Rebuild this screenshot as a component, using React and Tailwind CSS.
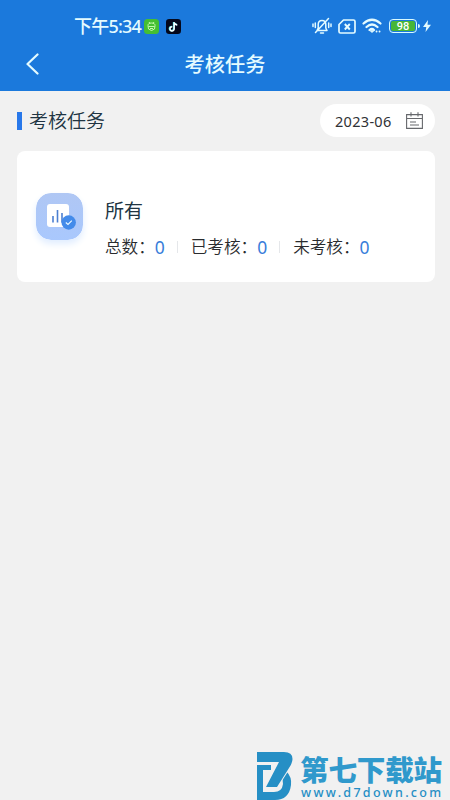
import React from 'react';

const stats = [
  { id: 'total', label: '总数：', value: 0 },
  { id: 'done', label: '已考核：', value: 0 },
  { id: 'todo', label: '未考核：', value: 0 },
];

const StatusBar = () => (
  <div className="flex h-[38px] items-end justify-between pr-[19px] pl-[74px] text-[#e4fbff]">
    <div className="flex h-6 items-center">
      <span className="w-[70px] text-[18px] leading-6 font-medium tracking-[-0.8px] whitespace-nowrap">下午5:34</span>
      <svg className="h-[15px] w-[15px]" viewBox="0 0 15 15" fill="none">
        <rect width="15" height="15" rx="3.5" fill="#45bf32" />
        <path d="M4 6.5C4 4.5 5.5 4 7.5 4S11 4.500 11 6.500L10.500 10Q7.500 13 4.500 10Z M4.500 7.500H10.500 M5 3L6 4.500 M10 3L9 4.500 M6 9.500H9" stroke="#d0ffb9" strokeWidth="0.9" />
      </svg>
      <svg className="ml-[7px] h-[15px] w-[15px]" viewBox="0 0 15 15" fill="none">
        <rect width="15" height="15" rx="3.2" fill="#04081b" />
        <path d="M7.700 3V9.700A2.100 2.100 0 1 1 5.800 7.500 M7.700 3.200Q8.500 5.500 11 5.700" stroke="#53e7e9" strokeWidth="1.7" />
        <path d="M8.200 3.300V10A2.100 2.100 0 1 1 6.300 7.800 M8.200 3.500Q9 5.800 11.300 6" stroke="#fff" strokeWidth="1.400" />
      </svg>
    </div>
    <div className="flex h-6 items-center">
      {/* Muted bell */}
      <svg className="h-[18px] w-5" viewBox="0 0 20 18" fill="none" stroke="currentColor" strokeWidth="1.5" strokeLinecap="round" strokeLinejoin="round">
        <path d="M5 13.500H15L13.800 11V7.500C13.800 2 6.200 2 6.200 7.500V11Z M8.500 16H11.500 M16.500 1.500L3.500 15.500 M3.300 6V10.500 M1 7V9.500 M16.700 6V10.500 M19 7V9.500" />
      </svg>
      {/* No SIM */}
      <svg className="ml-[6px] h-[15px] w-[18px]" viewBox="0 0 18 15" fill="none" stroke="currentColor" strokeWidth="1.7" strokeLinejoin="round">
        <path d="M5.500 1H15.500Q17 1 17 2.500V12.500Q17 14 15.500 14H2.500Q1 14 1 12.500V5.500Z" />
        <path d="M6.800 5L11.800 10.500M11.800 5L6.800 10.500" strokeWidth="1.900" />
      </svg>
      <svg className="ml-[6px] h-4 w-5" viewBox="0 0 20 16" fill="none" stroke="currentColor" strokeWidth="2.2" strokeLinecap="round">
        <path d="M1.500 5.500Q10 -2 18.500 5.500 M4.500 9Q10 4 15.500 9 M7.500 12Q10 10 12 12" />
        <path d="M8.500 13L10 14.500L11.500 13Z" fill="currentColor" strokeWidth="1" />
        <path d="M14.500 13.500H14.600M17.500 13.500H17.600" strokeWidth="1.800" />
      </svg>
      <div className="ml-[7px] flex h-[14px] w-[28px] items-center rounded-[4px] border-[1.500px] border-[#d8faff] p-px">
        <div className="flex h-full w-full items-center justify-center rounded-[2px] bg-[#47b638] font-['Roboto',sans-serif] text-[11px] leading-none font-medium text-white">98</div>
      </div>
      <div className="ml-px h-1 w-[2px] rounded-r bg-[#d8faff]" />
      <svg className="ml-[3px] h-3 w-2" viewBox="0 0 8 12" fill="currentColor">
        <path d="M5 0L0 7H3.300L2.500 12L8 4.800H4.500Z" />
      </svg>
    </div>
  </div>
);

const Header = () => (
  <header className="h-[91px] bg-[#1b79dc]">
    <StatusBar />
    <div className="grid h-[52px] grid-cols-[1fr_auto_1fr] items-center">
      <button className="ml-[25px] w-4" aria-label="返回">
        <svg className="h-[22px] w-[15px]" viewBox="0 0 15 22" fill="none" stroke="#e4fbff" strokeWidth="2.2" strokeLinecap="round" strokeLinejoin="round">
          <path d="M12.500 1.500L2.500 11L12.500 20.500" />
        </svg>
      </button>
      <h1 className="text-[20.200px] leading-7 font-medium text-[#e4fbff]">考核任务</h1>
    </div>
  </header>
);

const TaskIcon = () => (
  <svg className="h-[47px] w-[47px] shrink-0 rounded-[15px] shadow-[0_4px_7px_#e0edff]" viewBox="0 0 47 47" fill="none">
    <defs>
      <linearGradient id="tile" x1="0" y1="0" x2="0" y2="1">
        <stop stopColor="#b0c7f4" />
        <stop offset="1" stopColor="#a9c8fd" />
      </linearGradient>
    </defs>
    <rect width="47" height="47" rx="15" fill="url(#tile)" />
    <rect x="11" y="11" width="22" height="23" rx="3" fill="#fff" />
    <path d="M17 23V29.500M21.500 17V29.500M26 20V29.500" stroke="#4c7fd1" strokeWidth="1.600" />
    <circle cx="32.700" cy="29.500" r="7.200" fill="#438bea" />
    <path d="M29.800 29.500L32 31.500L35.800 27.700" stroke="#e9f8ff" strokeWidth="1.200" />
  </svg>
);

const Watermark = () => (
  <div className="flex h-[49px] w-[187px] gap-[7px] font-['Noto_Sans_CJK_SC',sans-serif] text-[#268fc5]">
    <svg className="h-[49px] w-[36px] shrink-0" viewBox="0 0 36 49" fill="currentColor">
      <path d="M0 14H14V19H6V41H17Q25 41 26 33Q26.300 29 24.500 26.500L29.500 20.500Q35 26 34 34Q32 49 18 49H0Z" />
      <path d="M0 1H27Q35.500 1 35.500 8Q35.500 12 32 17L20 36H9L22 11H0Z" stroke="#f1f1f1" strokeWidth="2" paintOrder="stroke" />
    </svg>
    <div className="flex w-[144px] flex-col pt-[3px]">
      <div className="h-[33px] text-[28.600px] leading-[29px] font-black tracking-[-0.200px] whitespace-nowrap text-[#3099cc]">第七下载站</div>
      <div className="h-3 pl-px font-['Noto_Sans',sans-serif] text-[12.500px] leading-3 font-medium tracking-[2.300px] whitespace-nowrap">www.d7down.com</div>
    </div>
  </div>
);

const App = () => {
  return (
    <div className="flex h-[800px] w-[450px] flex-col overflow-hidden bg-[#f1f1f1] font-['Noto_Sans','Noto_Sans_CJK_SC',sans-serif]">
      <Header />

      <main className="flex-1 pr-[15px] pl-[17px]">
        <div className="mt-[13px] flex h-[33px] items-center justify-between">
          <div className="flex items-center gap-[7px]">
            <span className="h-[18px] w-[5px] bg-[#2878ea]" />
            <h2 className="text-[19px] leading-6 font-[350] text-[#203442]">考核任务</h2>
          </div>
          <button className="flex h-[33px] w-[115px] items-center justify-between rounded-full bg-white pr-3 pl-[15px]">
            <span className="text-[14.500px] leading-5 tracking-[0.300px] text-[#303235]">2023-06</span>
            <svg className="h-[17px] w-[17px]" viewBox="0 0 17 17" fill="none" stroke="#66686c" strokeWidth="1.100">
              <path d="M.6 2.600H16.400V16.400H.6Z M.6 6.500H16.400 M5 .3V4.500M12 .3V4.500 M4 10H10M4 13H13" />
            </svg>
          </button>
        </div>

        <section className="mt-[14px] flex h-[131px] rounded-[8px] bg-white pt-[42px] pl-[19px]">
          <TaskIcon />
          <div className="ml-[22px] pt-[4px]">
            <h3 className="text-[19px] leading-7 text-[#203442]">所有</h3>
            <div className="mt-[10px] flex items-center">
              {stats.map((item, i) => (
                <React.Fragment key={item.id}>
                  {i > 0 && <span className="mr-[13px] ml-[11px] h-3 w-px bg-[#e5e7ea]" />}
                  <span className="text-[16.600px] leading-6 font-[350] text-[#292b2e]">{item.label}</span>
                  <span className="w-[11px] text-[17.500px] leading-6 text-[#397dda]">{item.value}</span>
                </React.Fragment>
              ))}
            </div>
          </div>
        </section>
      </main>

      <footer className="flex justify-end pr-[6px]">
        <Watermark />
      </footer>
    </div>
  );
};

export default App;
